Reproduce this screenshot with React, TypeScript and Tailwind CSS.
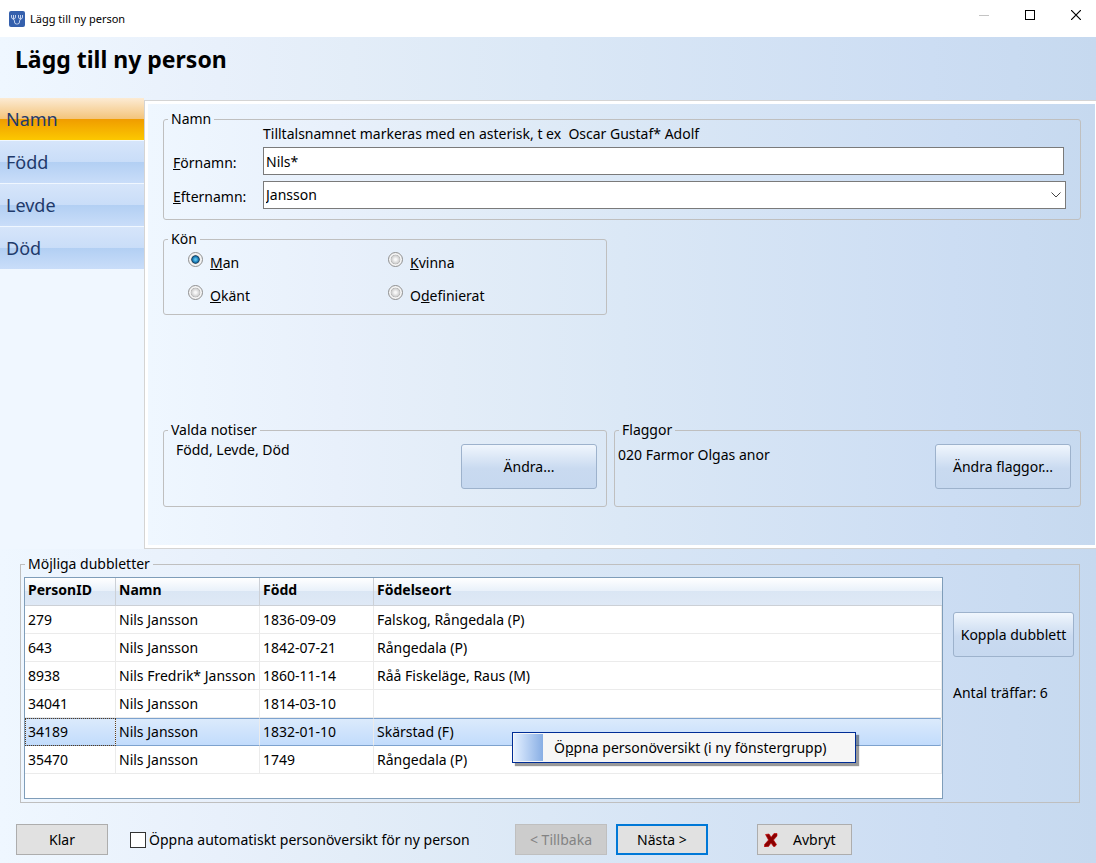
import { useState } from "react";
import type { ReactNode } from "react";

const STEPS = ["Namn", "Född", "Levde", "Död"];

const GENDERS = [
  { id: "man", before: "", key: "M", after: "an" },
  { id: "kvinna", before: "", key: "K", after: "vinna" },
  { id: "okant", before: "", key: "O", after: "känt" },
  { id: "odefinierat", before: "O", key: "d", after: "efinierat" },
];

const DUPLICATES = [
  { id: "279", name: "Nils Jansson", born: "1836-09-09", place: "Falskog, Rångedala (P)" },
  { id: "643", name: "Nils Jansson", born: "1842-07-21", place: "Rångedala (P)" },
  { id: "8938", name: "Nils Fredrik* Jansson", born: "1860-11-14", place: "Råå Fiskeläge, Raus (M)" },
  { id: "34041", name: "Nils Jansson", born: "1814-03-10", place: "" },
  { id: "34189", name: "Nils Jansson", born: "1832-01-10", place: "Skärstad (F)" },
  { id: "35470", name: "Nils Jansson", born: "1749", place: "Rångedala (P)" },
];

function Group({ title, rounded = true, className = "", children }: { title: string; rounded?: boolean; className?: string; children: ReactNode }) {
  return (
    <fieldset className={`min-w-0 border border-[#bfbfbf] ${rounded ? "rounded-[3px]" : ""}`}>
      <legend className="ml-1 h-5 px-[3px] leading-5">{title}</legend>
      <div className={className}>{children}</div>
    </fieldset>
  );
}

function GlossButton({ className = "", children }: { className?: string; children: ReactNode }) {
  return (
    <button
      type="button"
      className={`h-[45px] shrink-0 whitespace-nowrap rounded-[3px] border border-[#9db2cc] bg-linear-to-b from-[#f0f6fd] via-[#c9daf0] via-55% to-[#c6d8ef] ${className}`}
    >
      {children}
    </button>
  );
}

function AppIcon() {
  return (
    <svg className="h-4 w-4" viewBox="0 0 16 16">
      <rect width="16" height="16" rx="2" fill="#3560ad" />
      <path
        d="M2.500 4v2q0 2 2 2t2-2V4M9.500 4v2q0 2 2 2t2-2V4M4.500 4v4M11.500 4v4M4.500 8q0 1.500 1 1.500V11q0 2 2 2h1q2 0 2-2V9.500q1 0 1-1.500"
        fill="none"
        stroke="#c3d2ee"
        strokeWidth="1"
      />
    </svg>
  );
}

export default function App() {
  const [step, setStep] = useState("Namn");
  const [gender, setGender] = useState("man");
  const [selected, setSelected] = useState("34189");

  return (
    <div className="flex min-h-screen flex-col bg-[linear-gradient(to_right,#eff7ff,#e8f0fb_20%,#e3edf8_32%,#dbe8f6_50%,#ccddf3_85%,#c6d9ef)] font-['Noto_Sans',sans-serif] text-sm text-black">
      <div className="flex h-[37px] items-center bg-white pl-[9px] pr-[15px] text-[11px]">
        <AppIcon />
        <span className="ml-[5px]">Lägg till ny person</span>
        <div className="ml-auto flex items-center gap-9 pb-[7px]">
          <button type="button" aria-label="Minimera">
            <svg className="h-[10px] w-[10px]" viewBox="0 0 10 10"><path d="M0 5.500h10" stroke="#c4c4c4" /></svg>
          </button>
          <button type="button" aria-label="Maximera">
            <svg className="h-[10px] w-[10px]" viewBox="0 0 10 10"><rect x=".5" y=".5" width="9" height="9" fill="none" stroke="#000" /></svg>
          </button>
          <button type="button" aria-label="Stäng">
            <svg className="h-[10px] w-[10px]" viewBox="0 0 10 10"><path d="M0 0l10 10M10 0L0 10" stroke="#000" strokeWidth="1.200" /></svg>
          </button>
        </div>
      </div>

      <header className="h-[61px] px-[15px] pt-1.5">
        <h1 className="text-[23px] font-bold leading-8">Lägg till ny person</h1>
      </header>

      <div className="flex">
        <nav className="flex w-36 shrink-0 flex-col gap-px bg-[#f0f7ff] pb-10">
          {STEPS.map((s) => (
            <button
              key={s}
              type="button"
              onClick={() => setStep(s)}
              className={`h-[42px] pl-1.5 text-left text-lg text-[#1f3a6b] ${
                step === s
                  ? "bg-[linear-gradient(#fcebd4,#f4c47a_50%,#f09c00_50%,#fcc800)]"
                  : "bg-[linear-gradient(#d6e5fa,#c9ddf8_50%,#b2cff3_50%,#c9ddf9)]"
              }`}
            >
              {s}
            </button>
          ))}
        </nav>

        <main className="mt-0.5 flex-1 border-y border-l border-[#d4d4d4]">
          <div className="flex flex-col border-[3px] border-r border-white bg-[linear-gradient(to_right,#eff7ff,#e8f0fb_20%,#e3edf8_32%,#dbe8f6_50%,#ccddf3_85%,#c6d9ef)] pb-[38px] pl-[15px] pr-[14px] pt-[5px]">
            <Group title="Namn" className="pb-[10px] pl-[9px] pr-[14px]">
              <p className="-mt-[5px] ml-[90px] whitespace-pre leading-5">Tilltalsnamnet markeras med en asterisk, t ex  Oscar Gustaf* Adolf</p>
              <div className="mt-[3px] grid grid-cols-[90px_1fr] items-center gap-y-1.5">
                <label htmlFor="fornamn" className="pt-1"><u>F</u>örnamn:</label>
                <input id="fornamn" defaultValue="Nils*" className="mr-0.5 h-7 min-w-0 border border-[#7a7a7a] bg-white px-0.5 outline-none" />
                <label htmlFor="efternamn" className="pt-1"><u>E</u>fternamn:</label>
                <div className="relative">
                  <select id="efternamn" className="block h-7 w-full appearance-none border border-[#7a7a7a] bg-white px-0.5 outline-none">
                    <option>Jansson</option>
                  </select>
                  <svg className="pointer-events-none absolute right-[5px] top-[11px] h-[6px] w-[10px]" viewBox="0 0 10 6">
                    <path d="M.5.5L5 5 9.500.5" fill="none" stroke="#444" />
                  </svg>
                </div>
              </div>
            </Group>

            <div className="mt-[9px] grid grid-cols-[444fr_467fr] gap-x-[7px]">
              <Group title="Kön" className="pb-2 pl-6 pt-1">
                <div className="grid grid-cols-[200px_1fr] gap-y-[13px]">
                  {GENDERS.map((g) => (
                    <label key={g.id} className="flex h-5 items-end gap-[7px]">
                      <input
                        type="radio"
                        name="kon"
                        checked={gender === g.id}
                        onChange={() => setGender(g.id)}
                        className="mb-1.5 h-[15px] w-[15px] appearance-none rounded-full border border-[#8f8f8f] bg-[radial-gradient(circle,#f8f8f8_10%,#d0d0d0_42%,#b4b4b4_50%,#f4f4f4_56%)] checked:bg-[radial-gradient(circle,#5cc5ee_8%,#1673ae_32%,#143a58_42%,#c8c8c8_48%,#f4f4f4_56%)]"
                      />
                      <span className="leading-5">{g.before}<u>{g.key}</u>{g.after}</span>
                    </label>
                  ))}
                </div>
              </Group>
            </div>

            <div className="mt-[105px] grid grid-cols-[444fr_467fr] gap-x-[7px]">
              <Group title="Valda notiser" className="pb-[17px] pl-3 pr-[9px]">
                <div className="flex items-start justify-between">
                  <span className="leading-5">Född, Levde, Död</span>
                  <GlossButton className="mt-1 w-[136px]">Ändra...</GlossButton>
                </div>
              </Group>
              <Group title="Flaggor" className="pb-[17px] pl-[3px] pr-[9px]">
                <div className="flex items-start justify-between">
                  <span className="leading-[30px]">020 Farmor Olgas anor</span>
                  <GlossButton className="mt-1 w-[136px]">Ändra flaggor...</GlossButton>
                </div>
              </Group>
            </div>
          </div>
        </main>
      </div>

      <section className="mt-[5px] pl-5 pr-4">
        <Group title="Möjliga dubbletter" rounded={false} className="pb-[3px] pl-[3px] pr-[5px] pt-[3px]">
          <div className="flex gap-[10px]">
            <div className="relative h-[222px] flex-1 border border-[#7f9db9] bg-white">
              <table className="w-full table-fixed border-separate border-spacing-0 text-left">
                <thead>
                  <tr className="h-7 bg-[linear-gradient(#fff,#e9f1fa_45%,#dae6f4_45%,#dfe9f6)] font-bold">
                    <th className="w-[91px] border-b border-r border-[#ccd0d6] pb-1 pl-[3px]">PersonID</th>
                    <th className="w-36 border-b border-r border-[#ccd0d6] pb-1 pl-[3px]">Namn</th>
                    <th className="w-[114px] border-b border-r border-[#ccd0d6] pb-1 pl-[3px]">Född</th>
                    <th className="border-b border-[#ccd0d6] pb-1 pl-[3px]">Födelseort</th>
                  </tr>
                </thead>
                <tbody>
                  {DUPLICATES.map((d) => {
                    const on = d.id === selected;
                    const cell = `border-b border-r border-r-[#ebebeb] pl-[3px] whitespace-nowrap ${on ? "border-b-[#7da2ce] border-t border-t-[#7da2ce]" : "border-b-[#ebebeb]"}`;
                    return (
                      <tr
                        key={d.id}
                        onClick={() => setSelected(d.id)}
                        className={`h-7 ${on ? "bg-linear-to-b from-[#dcebfc] to-[#c1dbfc]" : ""}`}
                      >
                        <td className={`${cell} ${on ? "outline-1 -outline-offset-1 outline-dotted outline-[#5a3c1e]" : ""}`}>{d.id}</td>
                        <td className={cell}>{d.name}</td>
                        <td className={cell}>{d.born}</td>
                        <td className={`${cell} ${on ? "rounded-r-[3px] border-r-[#7da2ce]" : ""}`}>{d.place}</td>
                      </tr>
                    );
                  })}
                </tbody>
              </table>

              <div className="absolute left-[487px] top-[154px] h-[31px] w-[344px] border border-[#002d96] bg-[#f6f6f6] p-px shadow-[3px_3px_1px_rgba(0,0,0,0.4)]">
                <button type="button" className="flex h-full w-full items-center whitespace-nowrap">
                  <span className="mr-[11px] h-full w-[29px] bg-linear-to-r from-[#e3efff] to-[#88aee4]" />
                  <span>Ö<u>p</u>pna personöversikt (i ny fönstergrupp)</span>
                </button>
              </div>
            </div>

            <div className="w-[121px] shrink-0 pt-[35px]">
              <GlossButton className="w-full">Koppla dubblett</GlossButton>
              <p className="mt-[26px] leading-5">Antal träffar: 6</p>
            </div>
          </div>
        </Group>
      </section>

      <footer className="flex items-center px-4 pt-[21px]">
        <button type="button" className="h-[31px] w-[92px] border border-[#adadad] bg-[#e1e1e1]">Klar</button>
        <label className="ml-[22px] flex w-[385px] items-center gap-[3px] whitespace-nowrap">
          <input type="checkbox" className="h-4 w-4 appearance-none border border-[#333] bg-white checked:bg-[#0078d7]" />
          Öppna automatiskt personöversikt för ny person
        </label>
        <button type="button" disabled className="h-[31px] w-[92px] border border-[#bfbfbf] bg-[#cccccc] text-[#838383]">&lt; Tillbaka</button>
        <button type="button" className="ml-[9px] h-[31px] w-[92px] border-2 border-[#0078d7] bg-[#e1e1e1]">Nästa &gt;</button>
        <button type="button" className="ml-[49px] flex h-[31px] w-[95px] items-center border border-[#adadad] bg-[#e1e1e1] pl-1.5">
          <svg className="h-[14px] w-[14px]" viewBox="0 0 14 14">
            <path d="M1.500 1.500L5 1l2.200 3.200L10 .5h3V3L9.500 7l3 4.500-1.500 2H9.500L7 10l-2.500 3.500L.5 14v-2.500L4.500 7z" fill="#8b0000" stroke="#c80000" strokeWidth=".6" />
          </svg>
          <span className="ml-[15px]">Avbryt</span>
        </button>
      </footer>
    </div>
  );
}
